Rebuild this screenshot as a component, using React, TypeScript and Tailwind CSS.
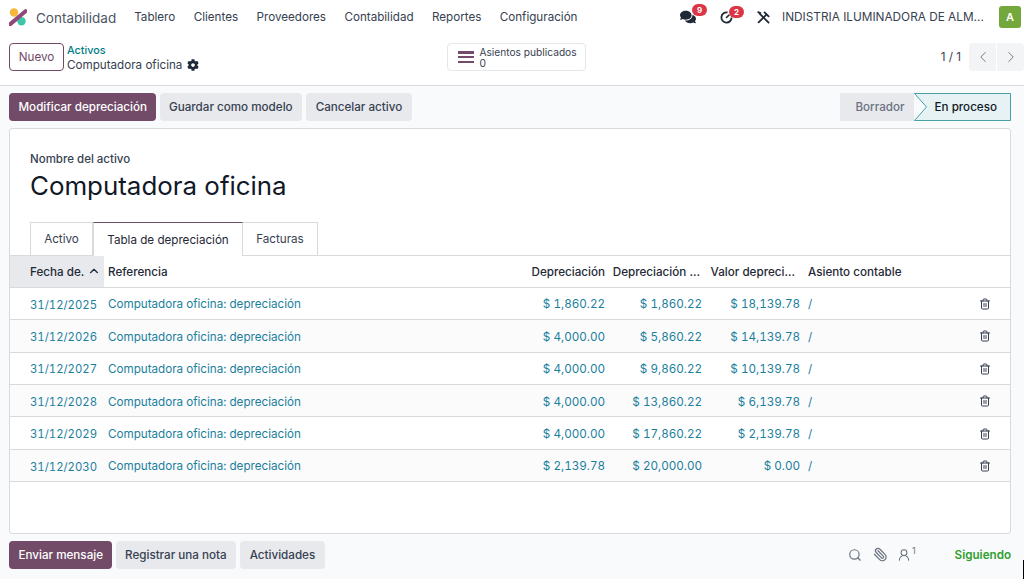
import React from "react";
import { ChevronLeft, ChevronRight, ChevronUp, Search, Paperclip, UserRound, Trash2 } from "lucide-react";
import { FaComments, FaCog } from "react-icons/fa";

const menu = ["Tablero", "Clientes", "Proveedores", "Contabilidad", "Reportes", "Configuración"];

const rows = [
  ["31/12/2025", "$ 1,860.22", "$ 1,860.22", "$ 18,139.78"],
  ["31/12/2026", "$ 4,000.00", "$ 5,860.22", "$ 14,139.78"],
  ["31/12/2027", "$ 4,000.00", "$ 9,860.22", "$ 10,139.78"],
  ["31/12/2028", "$ 4,000.00", "$ 13,860.22", "$ 6,139.78"],
  ["31/12/2029", "$ 4,000.00", "$ 17,860.22", "$ 2,139.78"],
  ["31/12/2030", "$ 2,139.78", "$ 20,000.00", "$ 0.00"],
];

const colClass = "grid grid-cols-[94px_423px_82px_97px_98px_161px_45px] items-center";

const Logo = () => (
  <svg width="18" height="18" viewBox="0 0 18 18">
    <circle cx="5" cy="4.5" r="4.2" fill="#f5b83d" />
    <circle cx="12.5" cy="13.2" r="4.2" fill="#3fc5ab" />
    <path d="M1.2 16.2 L16.5 3.2" stroke="#8f4a7c" strokeWidth="4" strokeLinecap="round" />
  </svg>
);

const ClockIcon = () => (
  <svg width="13" height="13" viewBox="0 0 13 13" fill="none" stroke="#1f2937">
    <path d="M11.6 6.5 A5.1 5.1 0 1 1 7.5 1.5" strokeWidth="1.8" />
    <path d="M6.5 6.5 L9 4.2" strokeWidth="1.6" strokeLinecap="round" />
  </svg>
);

const ToolsIcon = () => (
  <svg width="13" height="13" viewBox="0 0 13 13" fill="none" stroke="#1f2937" strokeLinecap="round">
    <path d="M2.6 2.6 L11.6 11.6" strokeWidth="1.8" />
    <path d="M1.6 11.4 L9.4 3.6" strokeWidth="1.8" />
    <path d="M7.6 1.4 L11.6 5.4 M1.2 1.2 L3.4 2" strokeWidth="1.8" />
  </svg>
);

const Badge = ({ n, className }: { n: number; className: string }) => (
  <span className={`absolute flex h-[12px] min-w-[15px] items-center justify-center rounded-full bg-[#dc3545] text-[8px] font-bold text-white ${className}`}>
    {n}
  </span>
);

const GreyButton = ({ children }: { children: React.ReactNode }) => (
  <button className="flex h-[28px] items-center rounded-[4px] bg-[#e7e9ed] px-[9.5px] pt-[2px] font-medium text-[#374151]">{children}</button>
);

const PrimaryButton = ({ children }: { children: React.ReactNode }) => (
  <button className="flex h-[28px] items-center rounded-[4px] bg-[#714b67] pl-[9.5px] pr-[8.5px] pt-[2px] font-medium text-white">{children}</button>
);

export default function App() {
  return (
    <div className="relative flex h-[579px] w-[1024px] flex-col overflow-hidden bg-[#f9fafb] font-['Inter',sans-serif] text-[11.65px] text-[#374151]">
      {/* Navbar */}
      <nav className="flex h-[34px] items-center bg-white pl-[9px] pr-[3px]">
        <Logo />
        <span className="ml-[9px] mr-[18px] pt-[2px] text-[13.5px] text-[#4b5563]">Contabilidad</span>
        <div className="flex gap-[18.4px] pt-[2px] text-[#374151]">
          {menu.map((m) => (
            <span key={m}>{m}</span>
          ))}
        </div>
        <div className="ml-auto flex items-center">
          <span className="relative mr-[24px] flex">
            <FaComments size={16} className="text-[#1f2937]" />
            <Badge n={9} className="left-[12px] top-[-5px]" />
          </span>
          <span className="relative mr-[24px] flex">
            <ClockIcon />
            <Badge n={2} className="left-[9px] top-[-5px]" />
          </span>
          <span className="mr-[12px] flex">
            <ToolsIcon />
          </span>
          <span className="mr-[18px] w-[199px] whitespace-nowrap pt-[2px] text-[11.8px] text-[#374151]">INDISTRIA ILUMINADORA DE ALM...</span>
          <span className="flex h-[22px] w-[22px] items-center justify-center rounded-[3px] bg-[#74a83c] text-[11px] font-semibold text-white">A</span>
        </div>
      </nav>

      {/* Control panel */}
      <div className="relative flex h-[52px] items-center border-b border-[#d8dadd] bg-white pb-[5px] pl-[9px]">
        <button className="flex h-[28px] w-[55px] items-center justify-center rounded-[4px] border border-[#714b67] pt-[2px] text-[#714b67]">Nuevo</button>
        <div className="ml-[3px] flex flex-col pt-[1px] leading-[14px]">
          <span className="text-[10.8px] font-medium text-[#017e84]">Activos</span>
          <span className="flex items-center gap-[5px]">
            Computadora oficina <FaCog size={12} className="text-[#1f2937]" />
          </span>
        </div>
        <div className="ml-[248px] flex h-[28px] w-[139px] items-center rounded-[4px] border border-[#e5e7eb] pl-[10px]">
          <div className="flex h-[12px] w-[16px] flex-col justify-between">
            <span className="h-[2.5px] bg-[#714b67]" />
            <span className="h-[2.5px] bg-[#714b67]" />
            <span className="h-[2.5px] bg-[#714b67]" />
          </div>
          <div className="ml-[5px] flex flex-col pt-[2px] text-[10.2px] leading-[11px]">
            <span className="whitespace-nowrap">Asientos publicados</span>
            <span>0</span>
          </div>
        </div>
        <div className="ml-auto flex items-center">
          <span className="mr-[8px] pt-[2px]">1 / 1</span>
          <button className="flex h-[28px] w-[27px] items-center justify-center rounded-l-[4px] bg-[#f3f4f6]">
            <ChevronLeft size={18} strokeWidth={1.25} className="text-[#6b7280]" />
          </button>
          <button className="ml-px flex h-[28px] w-[27px] items-center justify-center rounded-r-[4px] bg-[#f3f4f6]">
            <ChevronRight size={18} strokeWidth={1.25} className="text-[#6b7280]" />
          </button>
        </div>
      </div>

      {/* Action bar */}
      <div className="flex items-center justify-between pl-[9px] pr-[13px] pt-[7px]">
        <div className="flex gap-[4px]">
          <PrimaryButton>Modificar depreciación</PrimaryButton>
          <GreyButton>Guardar como modelo</GreyButton>
          <GreyButton>Cancelar activo</GreyButton>
        </div>
        <div className="flex h-[28px]">
          <div className="flex w-[74px] items-center justify-center bg-[#e7e9ed] pl-[6px] pt-[2px] font-medium text-[#6b7280]">Borrador</div>
          <div className="relative flex w-[97px] items-center justify-end pr-[14px] pt-[2px] font-medium text-[#111827]">
            <svg className="absolute inset-0" width="97" height="28" viewBox="0 0 97 28">
              <path d="M0.5 0.5 H96.5 V27.5 H0.5 L12.5 14 Z" fill="#e6f2f3" stroke="#017e84" strokeOpacity="0.7" />
            </svg>
            <span className="relative">En proceso</span>
          </div>
        </div>
      </div>

      {/* Form sheet */}
      <div className="ml-[9px] mr-[13px] mt-[7px] flex h-[406px] flex-col rounded-[3px] border border-[#d8dadd] bg-white">
        <div className="pl-[20px] pt-[23px]">
          <div className="text-[11.5px] font-medium leading-[14px] text-[#374151]">Nombre del activo</div>
          <h1 className="mt-[1.5px] text-[25.9px] font-normal leading-[36px] text-[#111827]">Computadora oficina</h1>
        </div>

        {/* Tabs */}
        <div className="mt-[19px] flex h-[33px] items-end border-b border-[#d8dadd] pl-[20px]">
          <div className="flex h-[33px] w-[63px] items-center justify-center border border-b-0 border-[#d8dadd] bg-white pt-[3px]">Activo</div>
          <div className="relative top-px flex h-[34px] w-[150px] items-center justify-center border-x border-t border-x-[#d8dadd] border-t-[#714b67] bg-white pt-[3px] text-[#1f2937]">
            Tabla de depreciación
          </div>
          <div className="flex h-[33px] w-[75px] items-center justify-center border border-b-0 border-l-0 border-[#d8dadd] bg-white pt-[3px]">Facturas</div>
        </div>

        {/* Table */}
        <div className={`${colClass} h-[32.4px] border-b border-[#d8dadd] font-medium text-[#1f2937]`}>
          <div className="flex h-full items-center gap-[3px] bg-[#e7e9ed] pl-[20px] pt-[3px]">
            Fecha de. <ChevronUp size={14} strokeWidth={2} className="-mt-[3px]" />
          </div>
          <div className="pl-[4px] pt-[3px]">Referencia</div>
          <div className="pr-[4px] pt-[3px] text-right">Depreciación</div>
          <div className="whitespace-nowrap pr-[6px] pt-[3px] text-right">Depreciación ...</div>
          <div className="whitespace-nowrap pr-[9px] pt-[3px] text-right">Valor depreci...</div>
          <div className="pl-[4px] pt-[3px]">Asiento contable</div>
          <div />
        </div>
        {rows.map((r, i) => (
          <div key={r[0]} className={`${colClass} h-[32.4px] border-b border-[#d8dadd] pt-[3px] tabular-nums text-[#1b7f9c] ${i % 2 === 1 ? "bg-[#fbfbfc]" : ""}`}>
            <div className="pl-[20px] text-[11.35px]">{r[0]}</div>
            <div className="pl-[4px]">Computadora oficina: depreciación</div>
            <div className="pr-[4px] text-right">{r[1]}</div>
            <div className="pr-[4px] text-right">{r[2]}</div>
            <div className="pr-[4px] text-right">{r[3]}</div>
            <div className="pl-[4px]">/</div>
            <div className="-mt-[2px] flex justify-center pr-[5px]">
              <Trash2 size={12} strokeWidth={2} className="text-[#374151]" />
            </div>
          </div>
        ))}
      </div>

      {/* Chatter bar */}
      <div className="flex items-center justify-between pl-[9px] pr-[13px] pt-[7px]">
        <div className="flex gap-[4px]">
          <PrimaryButton>Enviar mensaje</PrimaryButton>
          <GreyButton>Registrar una nota</GreyButton>
          <GreyButton>Actividades</GreyButton>
        </div>
        <div className="flex items-center text-[#6b7280]">
          <Search size={14} strokeWidth={2} />
          <Paperclip size={15} strokeWidth={2} className="ml-[11px] -scale-x-100" />
          <UserRound size={14} strokeWidth={1.75} className="ml-[9px]" />
          <span className="relative top-[-4px] ml-[1px] text-[9px]">1</span>
          <span className="ml-[39px] pt-[2px] font-semibold text-[#2f9e2f]">Siguiendo</span>
        </div>
      </div>

      <div className="absolute bottom-0 right-0 h-[19px] w-px bg-black" />
    </div>
  );
}
